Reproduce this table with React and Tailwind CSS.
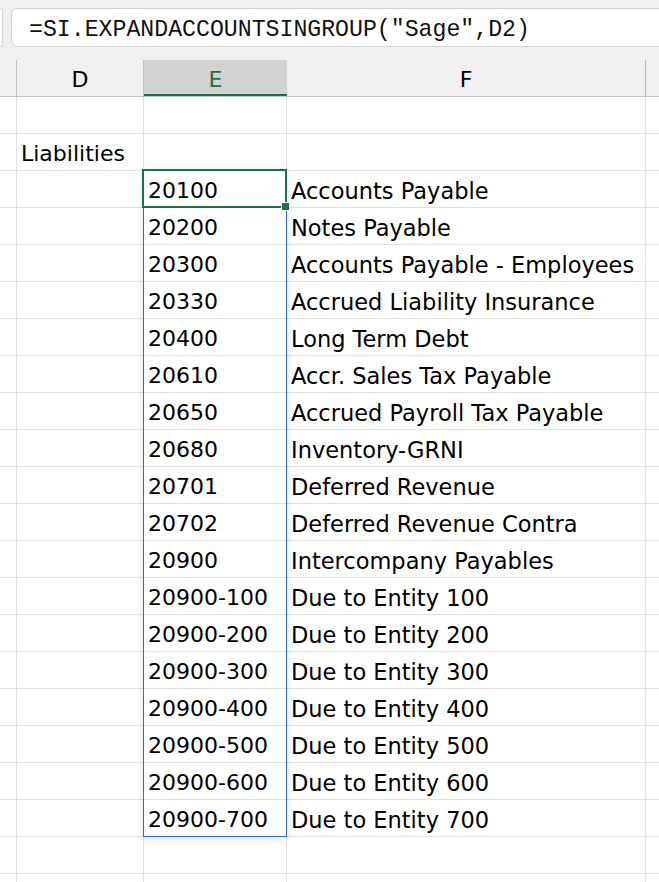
import React from "react";

const data = [
  ["20100", "Accounts Payable"],
  ["20200", "Notes Payable"],
  ["20300", "Accounts Payable - Employees"],
  ["20330", "Accrued Liability Insurance"],
  ["20400", "Long Term Debt"],
  ["20610", "Accr. Sales Tax Payable"],
  ["20650", "Accrued Payroll Tax Payable"],
  ["20680", "Inventory-GRNI"],
  ["20701", "Deferred Revenue"],
  ["20702", "Deferred Revenue Contra"],
  ["20900", "Intercompany Payables"],
  ["20900-100", "Due to Entity 100"],
  ["20900-200", "Due to Entity 200"],
  ["20900-300", "Due to Entity 300"],
  ["20900-400", "Due to Entity 400"],
  ["20900-500", "Due to Entity 500"],
  ["20900-600", "Due to Entity 600"],
  ["20900-700", "Due to Entity 700"],
];

const rows = [
  ["", "", ""],
  ["Liabilities", "", ""],
  ...data.map(([a, b]) => ["", a, b]),
  ["", "", ""],
  ["", "", ""],
];

function Row({ d, e, f }) {
  const cell = "h-full border-r border-[#e1e1e1] flex items-end pb-[5px] whitespace-nowrap overflow-visible";
  return (
    <div className="flex h-[37px] border-b border-[#e1e1e1]">
      <div className={`${cell} w-[17px]`} />
      <div className={`${cell} w-[127px] pl-[4px]`}>{d}</div>
      <div className={`${cell} w-[143px] pl-[4px]`}>{e}</div>
      <div className={`${cell} w-[359px] pl-[4px] text-[22.5px]`}>{f}</div>
      <div className="flex-1" />
    </div>
  );
}

export default function App() {
  return (
    <div
      className="w-[659px] h-[882px] overflow-hidden bg-white text-[22px] leading-none text-black"
      style={{ fontFamily: '"DejaVu Sans", sans-serif' }}
    >
      <div className="bg-[#f0f0f0] flex flex-col">
        <div className="flex pt-[8px] h-[60px]">
          <div className="w-[3px] h-[39px] bg-white border border-l-0 border-[#d2d2d2] rounded-r-[6px]" />
          <div
            className="ml-[8px] mr-[-14px] flex-1 h-[39px] bg-white border border-[#d2d2d2] rounded-[7px] flex items-end pb-[4px] pl-[17px] text-[23.2px] text-[#111] whitespace-nowrap"
            style={{ fontFamily: '"Liberation Mono", monospace' }}
          >
            =SI.EXPANDACCOUNTSINGROUP("Sage",D2)
          </div>
        </div>
        <div className="flex h-[37px] border-b border-[#c4c4c4]">
          <div className="w-[17px] h-full border-r border-[#c4c4c4]" />
          <div className="w-[127px] h-full border-r border-[#c4c4c4] flex items-end justify-center pb-[5px]">D</div>
          <div className="w-[143px] h-full bg-[#d2d2d2] border-b-2 border-[#1e7145] flex items-end justify-center pb-[3px] text-[#1e7145]">
            E
          </div>
          <div className="w-[359px] h-full border-r border-[#b8b8b8] flex items-end justify-center pb-[5px]">F</div>
          <div className="flex-1" />
        </div>
      </div>
      <div className="relative">
        {rows.map((r, i) => (
          <Row key={i} d={r[0]} e={r[1]} f={r[2]} />
        ))}
        <div className="absolute left-[143px] top-[73px] w-[144px] h-[667px] border border-[#2f6cc8] shadow-[0_2px_8px_rgba(0,0,0,0.12)] pointer-events-none" />
        <div className="absolute left-[142px] top-[72px] w-[145px] h-[39px] border-2 border-[#1e7145] pointer-events-none" />
        <div className="absolute left-[281px] top-[105px] w-[9px] h-[9px] bg-[#1e7145] border border-white pointer-events-none" />
      </div>
    </div>
  );
}
